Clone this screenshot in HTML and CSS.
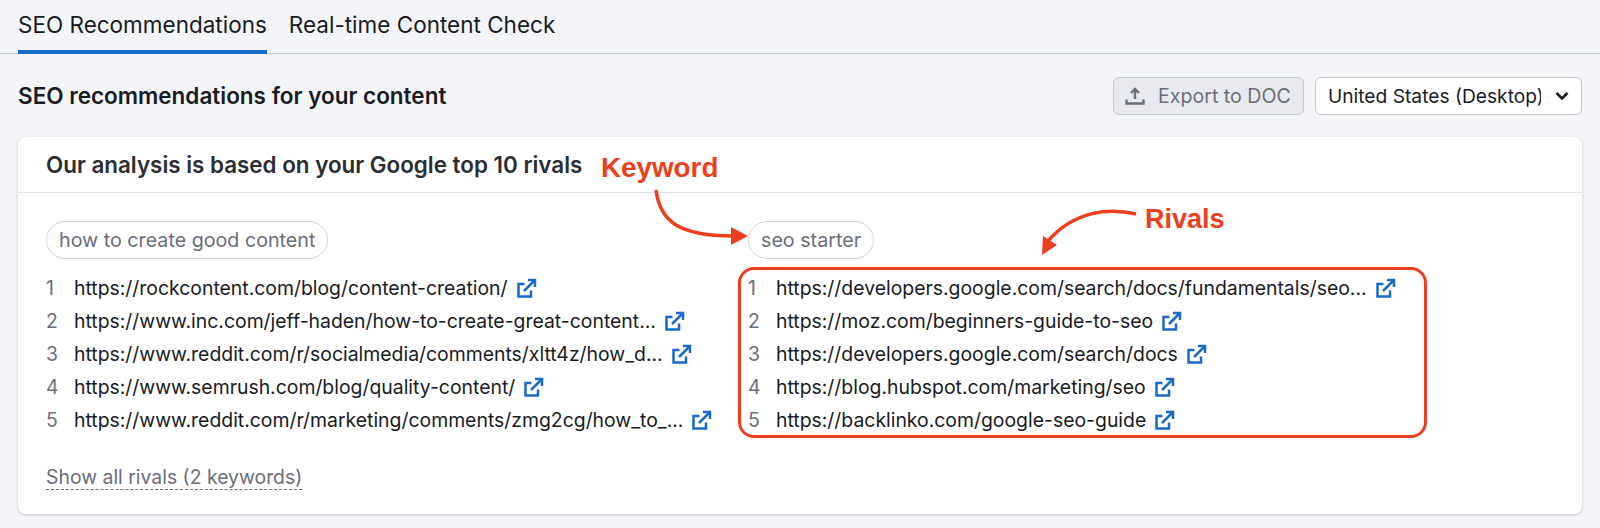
FILE: index.html
```html
<!DOCTYPE html>
<html lang="en">
<head>
    <meta charset="UTF-8">
    <meta name="viewport" content="width=device-width, initial-scale=1.0">
    <title>SEO Recommendations</title>
    <link rel="stylesheet" href="styles.css">
</head>
<body>

    <svg class="icon-defs" width="0" height="0">
        <symbol id="ext" viewBox="0 0 20 20">
            <path d="M7.500 6H1.500V18.500H14V12.500" fill="none" stroke="currentColor" stroke-width="2.500"/>
            <path d="M7 13 17 3" fill="none" stroke="currentColor" stroke-width="2.500"/>
            <path d="M11 2H18V9" fill="none" stroke="currentColor" stroke-width="2.500"/>
        </symbol>
    </svg>

    <div class="tabs">
        <a class="tab active">SEO Recommendations</a>
        <a class="tab">Real-time Content Check</a>
    </div>

    <div class="toolbar">
        <h1>SEO recommendations for your content</h1>
        <div class="actions">
            <button class="export">
                <svg width="20" height="20" viewBox="0 0 20 20">
                    <path d="M10 13V3.500M6 7l4-4 4 4M1.500 13.500V17.500H18.500V13.500" fill="none" stroke="currentColor" stroke-width="2.400"/>
                </svg>
                Export to DOC
            </button>
            <div class="select">
                <span class="select-value">United States (Desktop)</span>
                <svg width="14" height="10" viewBox="0 0 14 10">
                    <path d="M1.500 2 7 7.500 12.500 2" fill="none" stroke="#191b23" stroke-width="2.600"/>
                </svg>
            </div>
        </div>
    </div>

    <div class="card">
        <div class="card-header">Our analysis is based on your Google top 10 rivals</div>
        <div class="card-body">
            <div class="columns">
                <div class="column">
                    <span class="chip">how to create good content</span>
                    <ol class="rivals">
                        <li><span class="num">1</span><a>https://rockcontent.com/blog/content-creation/</a><svg class="ext"><use href="#ext"/></svg></li>
                        <li><span class="num">2</span><a>https://www.inc.com/jeff-haden/how-to-create-great-content...</a><svg class="ext"><use href="#ext"/></svg></li>
                        <li><span class="num">3</span><a>https://www.reddit.com/r/socialmedia/comments/xltt4z/how_d...</a><svg class="ext"><use href="#ext"/></svg></li>
                        <li><span class="num">4</span><a>https://www.semrush.com/blog/quality-content/</a><svg class="ext"><use href="#ext"/></svg></li>
                        <li><span class="num">5</span><a>https://www.reddit.com/r/marketing/comments/zmg2cg/how_to_...</a><svg class="ext"><use href="#ext"/></svg></li>
                    </ol>
                </div>
                <div class="column">
                    <span class="chip">seo starter</span>
                    <ol class="rivals">
                        <li><span class="num">1</span><a>https://developers.google.com/search/docs/fundamentals/seo...</a><svg class="ext"><use href="#ext"/></svg></li>
                        <li><span class="num">2</span><a>https://moz.com/beginners-guide-to-seo</a><svg class="ext"><use href="#ext"/></svg></li>
                        <li><span class="num">3</span><a>https://developers.google.com/search/docs</a><svg class="ext"><use href="#ext"/></svg></li>
                        <li><span class="num">4</span><a>https://blog.hubspot.com/marketing/seo</a><svg class="ext"><use href="#ext"/></svg></li>
                        <li><span class="num">5</span><a>https://backlinko.com/google-seo-guide</a><svg class="ext"><use href="#ext"/></svg></li>
                    </ol>
                </div>
            </div>
            <a class="show-all">Show all rivals (2 keywords)</a>
        </div>
    </div>

    <!-- red notes drawn on top of the screenshot -->
    <span class="note note-keyword">Keyword</span>
    <span class="note note-rivals">Rivals</span>
    <div class="red-box"></div>
    <svg class="arrows" width="1600" height="528" viewBox="0 0 1600 528">
        <path d="M656 190C660 222 680 236 733 236" fill="none" stroke="#ee3f1c" stroke-width="3.500"/>
        <path d="M748 236 731 227V245Z" fill="#ee3f1c"/>
        <path d="M1136 214C1110 208 1075 210 1048 241" fill="none" stroke="#ee3f1c" stroke-width="3.500"/>
        <path d="M1042 255 1043 236 1057 245Z" fill="#ee3f1c"/>
    </svg>

</body>
</html>
```

FILE: styles.css
```css
body {
    font-family: 'Inter', 'Liberation Sans', sans-serif;
    background-color: #f4f5f9;
    color: #191b23;
    margin: 0;
    padding: 0;
    height: 528px;
    overflow: hidden;
    position: relative;
}

.icon-defs {
    position: absolute;
}

.tabs {
    display: flex;
    gap: 22px;
    height: 53px;
    padding: 0 18px;
    border-bottom: 1px solid #c4c7cf;
}

.tab {
    font-size: 22.5px;
    line-height: 50px;
    height: 54px;
}

.tab.active {
    height: 50px;
    border-bottom: 4px solid #1a6ac9;
}

.toolbar {
    display: flex;
    align-items: center;
    justify-content: space-between;
    padding: 23px 18px 22px;
}

h1 {
    font-size: 22.5px;
    font-weight: 600;
    margin: 0 0 2px;
}

.actions {
    display: flex;
    gap: 11px;
}

.export {
    display: flex;
    align-items: center;
    gap: 13px;
    width: 191px;
    height: 38px;
    padding: 0 11px;
    box-sizing: border-box;
    font-family: inherit;
    font-size: 19.6px;
    color: #6c6e79;
    background-color: #e9eaef;
    border: 1px solid #c4c7cf;
    border-radius: 6px;
    white-space: nowrap;
}

.select {
    display: flex;
    align-items: center;
    justify-content: space-between;
    width: 267px;
    height: 38px;
    padding: 0 12px;
    box-sizing: border-box;
    font-size: 19.2px;
    background-color: #fff;
    border: 1px solid #c4c7cf;
    border-radius: 6px;
}

.select-value {
    width: 213px;
    overflow: hidden;
    white-space: nowrap;
}

.card {
    margin: 0 18px;
    height: 377px;
    background-color: #fff;
    border-radius: 8px;
    box-shadow: 0 1px 3px rgba(25, 27, 35, 0.2);
}

.card-header {
    height: 56px;
    line-height: 56px;
    padding: 0 28px;
    box-sizing: border-box;
    font-size: 22.4px;
    font-weight: 600;
    color: #2b2d35;
    border-bottom: 1px solid #e0e1e9;
}

.card-body {
    padding: 28px 28px;
}

.columns {
    display: grid;
    grid-template-columns: 702px 1fr;
}

.chip {
    display: inline-block;
    height: 38px;
    line-height: 36px;
    padding: 0 12px;
    box-sizing: border-box;
    font-size: 19.7px;
    color: #6c6e79;
    border: 1px solid #d1d4db;
    border-radius: 19px;
}

.rivals {
    list-style: none;
    margin: 12px 0 0;
    padding: 0;
}

.rivals li {
    display: flex;
    align-items: center;
    height: 33px;
    font-size: 19.4px;
}

.num {
    width: 28px;
    color: #6c6e79;
}

.ext {
    width: 20px;
    height: 20px;
    margin-left: 9px;
    color: #1a6ac9;
}

.show-all {
    display: inline-block;
    margin-top: 29px;
    font-size: 19.4px;
    line-height: 24px;
    color: #6c6e79;
    border-bottom: 1px dashed #6c6e79;
}

.note {
    position: absolute;
    font-family: 'Liberation Sans', sans-serif;
    font-weight: 700;
    color: #ee3f1c;
    line-height: 30px;
}

.note-keyword {
    left: 601px;
    top: 153px;
    font-size: 27.8px;
}

.note-rivals {
    left: 1145px;
    top: 204px;
    font-size: 27px;
}

.red-box {
    position: absolute;
    left: 738px;
    top: 267px;
    width: 689px;
    height: 171px;
    box-sizing: border-box;
    border: 3px solid #ee3f1c;
    border-radius: 16px;
}

.arrows {
    position: absolute;
    left: 0;
    top: 0;
}
```
